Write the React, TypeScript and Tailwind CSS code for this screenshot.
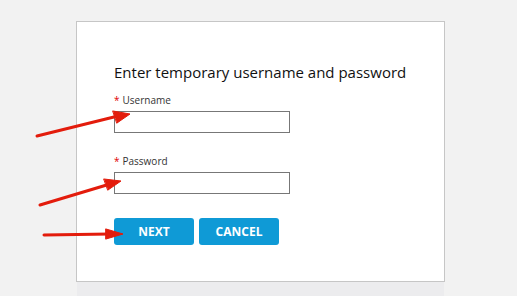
import React from 'react';

// Campo com label obrigatório
function Field({ label }: { label: string }) {
    return (
        <div className="flex flex-col">
            <label className="text-[10px] leading-[13px] text-[#333]">
                <span className="text-[#e00000] mr-[3px]">*</span>
                {label}
            </label>
            <input
                type={label === 'Password' ? 'password' : 'text'}
                className="mt-[4px] w-[176px] h-[22px] border border-[#777] bg-white outline-none"
            />
        </div>
    );
}

export default function App() {
    return (
        <div className="relative w-[517px] h-[296px] overflow-hidden bg-[#f2f2f2] font-['Open_Sans',sans-serif]">
            <div className="ml-[76px] mt-[21px] w-[369px]">
                {/* Cartão de login */}
                <div className="h-[261px] border border-[#c6c6c6] bg-white pl-[37px] pt-[39px]">
                    <h1 className="text-[15px] leading-[22px] text-[#111]">
                        Enter temporary username and password
                    </h1>
                    <div className="mt-[11px]">
                        <Field label="Username" />
                    </div>
                    <div className="mt-[22px]">
                        <Field label="Password" />
                    </div>
                    <div className="mt-[24px] flex gap-[5px]">
                        <button className="w-[80px] h-[27px] rounded-[3px] bg-[#0f9ad6] text-white text-[12px] font-bold">
                            NEXT
                        </button>
                        <button className="w-[80px] h-[27px] rounded-[3px] bg-[#0f9ad6] text-white text-[12px] font-bold">
                            CANCEL
                        </button>
                    </div>
                </div>
                <div className="ml-[1px] mr-[1px] h-[20px] bg-[#ececee]" />
            </div>

            {/* Setas vermelhas de anotação */}
            <svg className="absolute inset-0 pointer-events-none" width="517" height="296">
                <g fill="#e31c0c" stroke="#e31c0c" strokeWidth="3" strokeLinecap="round">
                    <line x1="37" y1="136" x2="118" y2="116" />
                    <polygon points="113,111 130,114 117,123" strokeWidth="1" />
                    <line x1="40" y1="205" x2="110" y2="184" />
                    <polygon points="104,179 121,181 108,190" strokeWidth="1" />
                    <line x1="44" y1="235" x2="110" y2="234" />
                    <polygon points="106,229 123,234 106,239" strokeWidth="1" />
                </g>
            </svg>
        </div>
    );
}
